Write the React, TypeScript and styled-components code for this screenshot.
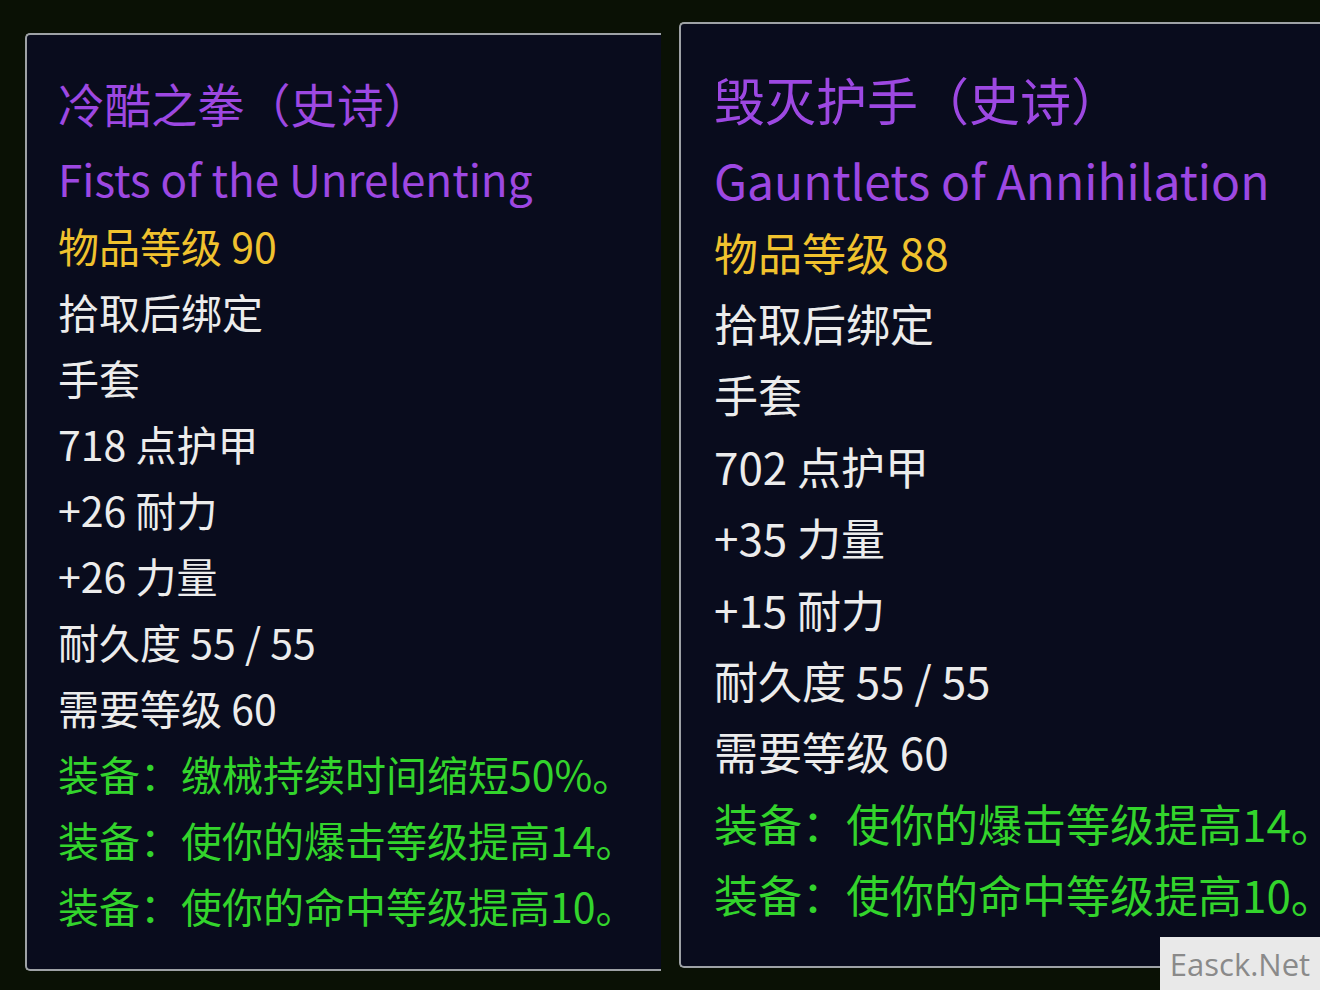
import React from "react";
import styled, { createGlobalStyle } from "styled-components";

type Tone = "epic" | "gold" | "plain" | "bonus";

interface TipLine {
  text: string;
  tone: Tone;
  kind?: "title" | "english";
}

interface ItemTip {
  id: string;
  lines: TipLine[];
}

const items: ItemTip[] = [
  {
    id: "fists",
    lines: [
      { text: "冷酷之拳（史诗）", tone: "epic", kind: "title" },
      { text: "Fists of the Unrelenting", tone: "epic", kind: "english" },
      { text: "物品等级 90", tone: "gold" },
      { text: "拾取后绑定", tone: "plain" },
      { text: "手套", tone: "plain" },
      { text: "718 点护甲", tone: "plain" },
      { text: "+26 耐力", tone: "plain" },
      { text: "+26 力量", tone: "plain" },
      { text: "耐久度 55 / 55", tone: "plain" },
      { text: "需要等级 60", tone: "plain" },
      { text: "装备：缴械持续时间缩短50%。", tone: "bonus" },
      { text: "装备：使你的爆击等级提高14。", tone: "bonus" },
      { text: "装备：使你的命中等级提高10。", tone: "bonus" },
    ],
  },
  {
    id: "gauntlets",
    lines: [
      { text: "毁灭护手（史诗）", tone: "epic", kind: "title" },
      { text: "Gauntlets of Annihilation", tone: "epic", kind: "english" },
      { text: "物品等级 88", tone: "gold" },
      { text: "拾取后绑定", tone: "plain" },
      { text: "手套", tone: "plain" },
      { text: "702 点护甲", tone: "plain" },
      { text: "+35 力量", tone: "plain" },
      { text: "+15 耐力", tone: "plain" },
      { text: "耐久度 55 / 55", tone: "plain" },
      { text: "需要等级 60", tone: "plain" },
      { text: "装备：使你的爆击等级提高14。", tone: "bonus" },
      { text: "装备：使你的命中等级提高10。", tone: "bonus" },
    ],
  },
];

const toneColors: Record<Tone, string> = {
  epic: "#9d48e2",
  gold: "#f0c22e",
  plain: "#ececec",
  bonus: "#33d42c",
};

interface Metrics {
  font: number;
  line: number;
  titleFont: number;
  englishFont: number;
  titleLine: number;
  englishLine: number;
}

const leftMetrics: Metrics = {
  font: 41,
  line: 66,
  titleFont: 46.5,
  englishFont: 44,
  titleLine: 82,
  englishLine: 68,
};

const rightMetrics: Metrics = {
  font: 44,
  line: 71.4,
  titleFont: 51,
  englishFont: 48,
  titleLine: 86,
  englishLine: 74.6,
};

const App: React.FC = () => {
  return (
    <>
      <GlobalStyle />
      <Page>
        <Panel $offset={11} $height={938} $width={636} $padTop={27} $padLeft={31}>
          {items[0].lines.map((line, i) => (
            <Line key={i} $tone={line.tone} $kind={line.kind} $m={leftMetrics}>
              {line.text}
            </Line>
          ))}
        </Panel>
        <Panel $offset={0} $height={946} $width={641} $padTop={32} $padLeft={33}>
          {items[1].lines.map((line, i) => (
            <Line key={i} $tone={line.tone} $kind={line.kind} $m={rightMetrics}>
              {line.text}
            </Line>
          ))}
        </Panel>
        <Watermark>Easck.Net</Watermark>
      </Page>
    </>
  );
};

const GlobalStyle = createGlobalStyle`
  html, body {
    margin: 0;
    padding: 0;
    background: #0a1105;
  }
  body {
    font-family: "Noto Sans CJK SC", "Noto Sans", sans-serif;
  }
`;

const Page = styled.div`
  position: relative;
  display: flex;
  align-items: flex-start;
  gap: 18px;
  width: 1320px;
  height: 990px;
  padding: 22px 0 0 25px;
  box-sizing: border-box;
  overflow: hidden;
  background: #0a1105;
`;

const Panel = styled.div<{
  $offset: number;
  $height: number;
  $width: number;
  $padTop: number;
  $padLeft: number;
}>`
  flex: none;
  display: flex;
  flex-direction: column;
  margin-top: ${(p) => p.$offset}px;
  width: ${(p) => p.$width}px;
  height: ${(p) => p.$height}px;
  padding: ${(p) => p.$padTop}px 0 0 ${(p) => p.$padLeft}px;
  box-sizing: border-box;
  background: #090c1d;
  border: 2px solid #9ea2a6;
  border-right: none;
  border-radius: 5px 0 0 5px;
`;

const Line = styled.div<{ $tone: Tone; $kind?: "title" | "english"; $m: Metrics }>`
  color: ${(p) => toneColors[p.$tone]};
  font-size: ${(p) =>
    p.$kind === "title"
      ? p.$m.titleFont
      : p.$kind === "english"
      ? p.$m.englishFont
      : p.$m.font}px;
  line-height: ${(p) =>
    p.$kind === "title"
      ? p.$m.titleLine
      : p.$kind === "english"
      ? p.$m.englishLine
      : p.$m.line}px;
  white-space: nowrap;
`;

const Watermark = styled.div`
  position: absolute;
  right: 0;
  bottom: 0;
  width: 160px;
  height: 53px;
  display: flex;
  align-items: center;
  justify-content: center;
  background: #e9e9e9;
  color: #8a8a8a;
  font-family: "Open Sans", "Liberation Sans", sans-serif;
  font-size: 31px;
`;

export default App;
